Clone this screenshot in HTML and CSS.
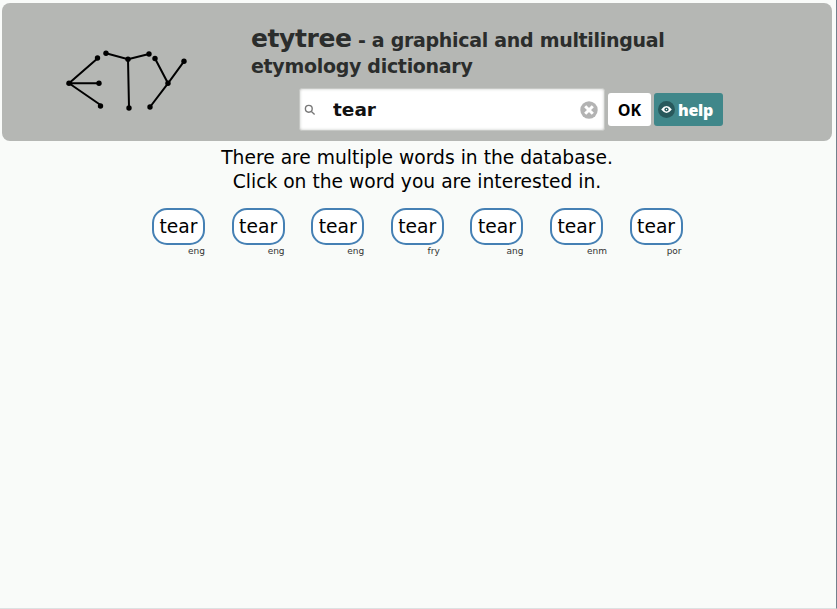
FILE: index.html
```
<!DOCTYPE html>
<html lang="en">
<head>
    <meta charset="UTF-8">
    <title>etytree</title>
    <link rel="stylesheet" href="styles.css">
</head>
<body>

    <div class="header">
        <svg class="logo" width="126" height="66" viewBox="0 0 126 66">
            <g class="edges">
                <path d="M34 12L5 37.3H35M5 37.3L38 60"/>
                <path d="M42 7.3L64 13.3L85 8M64 13.3L65 61"/>
                <path d="M91 12.5L104 37.3L120 15.3M104 37.3L86 61"/>
            </g>
            <g class="nodes">
                <circle cx="33.5" cy="12" r="2.7"/>
                <circle cx="5" cy="37.3" r="2.7"/>
                <circle cx="35" cy="37.3" r="2.7"/>
                <circle cx="36.5" cy="60" r="2.7"/>
                <circle cx="42" cy="7.3" r="2.7"/>
                <circle cx="64" cy="13.3" r="2.7"/>
                <circle cx="85" cy="8" r="2.7"/>
                <circle cx="65" cy="62" r="2.7"/>
                <circle cx="91" cy="12.5" r="2.7"/>
                <circle cx="104" cy="37.3" r="2.7"/>
                <circle cx="120" cy="15.3" r="2.7"/>
                <circle cx="86" cy="61" r="2.7"/>
            </g>
        </svg>
        <div class="heading">
            <h1><span class="name">etytree</span> - a graphical and multilingual<br>etymology dictionary</h1>
            <form class="search" onsubmit="return false">
                <div class="search-box">
                    <svg class="lens" width="12" height="12" viewBox="0 0 12 12">
                        <circle cx="4.8" cy="4.8" r="3.4"/>
                        <path d="M7.4 7.4L10.6 10.4"/>
                    </svg>
                    <input type="text" id="search" value="tear">
                    <svg class="clear" width="18" height="18" viewBox="0 0 18 18">
                        <circle cx="9" cy="9" r="8.7"/>
                        <path d="M5.2 5.2L12.8 12.8M12.8 5.2L5.2 12.8"/>
                    </svg>
                </div>
                <button class="ok">OK</button>
                <button class="help" type="button">
                    <svg width="17" height="17" viewBox="0 0 17 17">
                        <circle class="disc" cx="8.5" cy="8.5" r="8.5"/>
                        <path class="eye" d="M3.2 8.5Q8.5 1.7 13.8 8.5Q8.5 15.3 3.2 8.5Z"/>
                        <circle class="iris" cx="8.5" cy="8.5" r="2.1"/>
                        <circle class="glint" cx="8.5" cy="8.5" r="0.7"/>
                    </svg>
                    <span>help</span>
                </button>
            </form>
        </div>
    </div>

    <p class="message">There are multiple words in the database.<br>Click on the word you are interested in.</p>

    <div class="words">
        <div class="word"><span class="label">tear</span><span class="lang">eng</span></div>
        <div class="word"><span class="label">tear</span><span class="lang">eng</span></div>
        <div class="word"><span class="label">tear</span><span class="lang">eng</span></div>
        <div class="word"><span class="label">tear</span><span class="lang fry">fry</span></div>
        <div class="word"><span class="label">tear</span><span class="lang">ang</span></div>
        <div class="word"><span class="label">tear</span><span class="lang enm">enm</span></div>
        <div class="word"><span class="label">tear</span><span class="lang por">por</span></div>
    </div>

</body>
</html>
```

FILE: styles.css
```
* {
    margin: 0;
    padding: 0;
    box-sizing: border-box;
}
body {
    height: 609px;
    background-color: #f9fbf9;
    border-right: 1px solid #72818d;
    border-bottom: 1px solid #dde1e2;
    font-family: "DejaVu Sans", Verdana, sans-serif;
    color: #000;
    overflow: hidden;
}
.header {
    display: flex;
    width: 830px;
    height: 138px;
    margin: 3px 0 0 2px;
    background: #b5b7b4;
    border-radius: 8px;
}
.logo {
    flex: none;
    margin: 43px 0 0 62px;
}
.edges {
    fill: none;
    stroke: #000;
    stroke-width: 2;
}
.heading {
    margin-left: 61px;
    padding-top: 23px;
}
h1 {
    height: 62px;
    font-size: 19px;
    line-height: 26px;
    letter-spacing: -0.3px;
    color: #2b2d2c;
    white-space: nowrap;
}
.name {
    font-size: 25px;
    line-height: 26px;
    letter-spacing: -0.4px;
}
.search {
    display: flex;
    align-items: center;
    margin-left: 48px;
}
.search-box {
    display: flex;
    align-items: center;
    width: 306px;
    height: 43px;
    padding: 0 6px 0 4px;
    background: #fff;
    border: 1px solid #c6c8c5;
    border-radius: 3px;
    box-shadow: inset 0 0 3px #c6c8c5;
}
.lens {
    fill: none;
    stroke: #777;
    stroke-width: 1.4;
}
input {
    flex: 1;
    width: 100px;
    padding-left: 17px;
    border: none;
    outline: none;
    background: transparent;
    font: bold 18.5px "DejaVu Sans", Verdana, sans-serif;
    color: #111;
}
.clear {
    fill: #b3b3b3;
}
.clear path {
    stroke: #fff;
    stroke-width: 3;
}
button {
    height: 33px;
    border: none;
    border-radius: 3px;
    font: bold 16px "Open Sans", sans-serif;
    cursor: pointer;
}
.ok {
    width: 43px;
    margin: 0 3px;
    background: #fff;
    color: #000;
}
.help {
    display: flex;
    align-items: center;
    gap: 3px;
    width: 69px;
    padding-left: 4px;
    background: #40878a;
    color: #fff;
    font-weight: 800;
    letter-spacing: -0.3px;
}
.disc {
    fill: #28595c;
}
.eye {
    fill: #fff;
}
.iris {
    fill: #28595c;
}
.glint {
    fill: #fff;
}
.message {
    margin-top: 5px;
    padding-right: 2px;
    font-size: 18.7px;
    line-height: 24px;
    text-align: center;
}
.words {
    display: flex;
    gap: 26.6px;
    margin: 14px 0 0 152px;
}
.word {
    display: flex;
    flex-direction: column;
    width: 53px;
}
.label {
    height: 37px;
    border: 2px solid #4580b4;
    border-radius: 15px;
    background: #fff;
    font-size: 18.7px;
    line-height: 34px;
    text-align: center;
}
.lang {
    align-self: flex-end;
    font-size: 9px;
    line-height: 12px;
    color: #333;
}
.fry {
    margin-right: 4px;
}
.enm {
    margin-right: -4px;
}
.por {
    margin-right: 1px;
}
```
